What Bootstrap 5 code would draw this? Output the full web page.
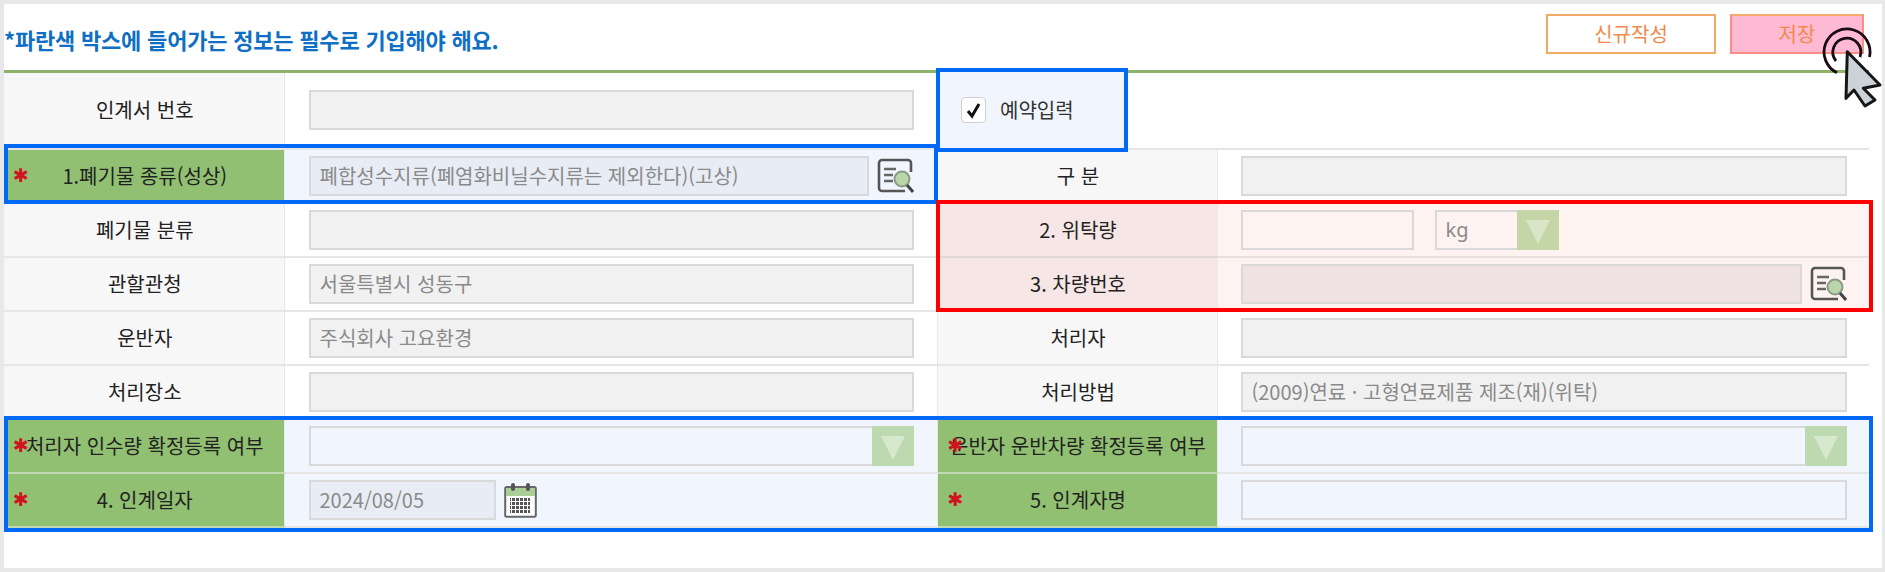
<!DOCTYPE html>
<html lang="ko">
<head>
<meta charset="utf-8">
<title>인계서 입력</title>
<link rel="stylesheet" href="https://cdn.jsdelivr.net/npm/bootstrap@5.3.0/dist/css/bootstrap.min.css">
<style>
html,body{height:100%;overflow:hidden}
body{background:#e8e8e8;font-family:"Noto Sans CJK KR","Noto Sans",sans-serif;font-size:20px;color:#222}
.sheet{position:relative;background:#fff;margin:4px 3px 4px 4px;height:564px;padding-right:13px}
.sheet-head{height:66px;padding-right:5px;padding-top:10px}
.sheet-title{font-size:22px;font-weight:700;color:#0e6fc4;letter-spacing:-.2px;margin:12px 0 0;line-height:1.2}
.act-row{column-gap:14px}
.act{width:170px;height:40px;padding:0;border-radius:0;background:#fff;border:2px solid #f2ab66;color:#f08a4b;font-size:20px;line-height:1}
.act-save{width:134px;background:#ffb9d2;border-color:#f78f82;border-top-color:#f5ad6c}
.act:hover{background:#fff;border-color:#f2ab66;color:#f08a4b}
.form-grid{table-layout:fixed;width:1865px;border-top:3px solid #8fb26a;margin:0}
.form-grid td,.form-grid th{padding:0;border:0;border-bottom:2px solid #e6e6e6;vertical-align:middle;height:54px;background:#fff;box-shadow:none;color:#222}
.form-grid tr.first td,.form-grid tr.first th{height:77px}
.form-grid th{position:relative;font-weight:400;text-align:center;background:#f7f7f7;border-right:1px solid #e8e8e8;white-space:nowrap;padding-left:2px}
.form-grid th.side2{border-left:1px solid #e8e8e8}
.form-grid .val{padding-left:24px;padding-right:23px}
.form-grid .val2{padding-left:23px;padding-right:22px}
.form-grid th.need{background:#91c072;border-bottom-color:#c3d9b6}
.form-grid td.tint{background:#f1f6fe}
.form-grid th.warm{background:#f7e6e6;border-bottom-color:#e2d8d8}
.form-grid td.warm{background:#fff3f2;border-bottom-color:#e8dedd}
.star{position:absolute;left:9px;top:50%;transform:translateY(-54%);color:#d0141f;font-family:"DejaVu Sans",sans-serif;font-size:19px;line-height:1}
.side2 .star{left:10px}
.fld{height:40px;border-radius:0;border:2px solid #d9d9d9;background:#f1f1f1;color:#8a8a8a;font-size:20px;padding:0 9px;box-shadow:none}
.fld:disabled,.fld[readonly]{background:#f1f1f1;color:#8a8a8a;opacity:1}
.form-grid .tint .fld[readonly]{background:#e8ecf4}
.form-grid .warm .fld[readonly]{background:#f1e3e3}
.form-grid .tint .fld-open[readonly]{background:#f1f6fe}
.form-grid .warm .fld-warm[readonly]{background:#fff3f2;width:173px}
.fld-date{width:187px}
.pick{height:40px;border:2px solid #d9d9d9;background:#f1f6fe}
.pick select{appearance:none;border:0;background:transparent;flex:1 1 auto;min-width:0;color:#8a8a8a;font-family:"Noto Sans","Noto Sans CJK KR",sans-serif;font-size:20px;padding:0 9px;outline:0}
.pick-arrow{flex:0 0 40px;background:#bcd9b0;margin:-2px -2px -2px 0;width:42px;height:40px;display:flex}
.pick-kg{width:124px;background:#fff3f2;margin-left:21px}
.pick-kg .pick-arrow{background:#c5d6a6}
.tick-wrap{position:relative;z-index:3;padding-left:24px;column-gap:14px}
.tick{width:25px;height:26px;border:1px solid #cfcfcf;border-radius:4px;background:#fff;display:flex;flex:none}
.tick-text{font-size:20px;color:#333}
.mark-box{position:absolute;border:4px solid #0069f5;pointer-events:none}
.mark-red{border-color:#f00}
.mk1{left:0;top:140px;width:934px;height:60px}
.mk2{left:932px;top:64px;width:192px;height:84px;background:#f1f6fe;z-index:2}
.mk3{left:932px;top:196px;width:937px;height:112px;z-index:2}
.mk4{left:0;top:412px;width:1869px;height:116px}
.pointer{position:absolute;left:1816px;top:21px;pointer-events:none;z-index:4}
</style>
</head>
<body>
<div class="sheet">
  <div class="sheet-head d-flex justify-content-between align-items-start">
    <p class="sheet-title">*파란색 박스에 들어가는 정보는 필수로 기입해야 해요.</p>
    <div class="d-flex act-row">
      <button type="button" class="btn act">신규작성</button>
      <button type="button" class="btn act act-save">저장</button>
    </div>
  </div>
  <table class="table form-grid">
    <colgroup><col style="width:280px"><col style="width:653px"><col style="width:280px"><col style="width:652px"></colgroup>
    <tbody>
      <tr class="first">
        <th>인계서 번호</th>
        <td class="val"><input class="form-control fld" readonly></td>
        <td colspan="2" class="p-0">
          <div class="d-flex align-items-center tick-wrap"><span class="tick"><svg width="23" height="24" viewBox="0 0 23 24"><path d="M6 13l4 5 7-12" fill="none" stroke="#111" stroke-width="3"/></svg></span><span class="tick-text">예약입력</span></div>
        </td>
      </tr>
      <tr>
        <th class="need"><span class="star">✱</span>1.폐기물 종류(성상)</th>
        <td class="val tint">
          <div class="d-flex align-items-center gap-2">
            <input class="form-control fld" readonly value="폐합성수지류(폐염화비닐수지류는 제외한다)(고상)">
            <svg class="flex-shrink-0" width="37" height="36" viewBox="0 0 37 36"><path d="M28 33H5a3 3 0 0 1-3-3V5a3 3 0 0 1 3-3h26a3 3 0 0 1 3 3v9" fill="none" stroke="#555" stroke-width="2.6"/><path d="M7 11h12M7 17h9M7 23h9" stroke="#666" stroke-width="2.4"/><circle cx="25" cy="21" r="7.5" fill="#b9d6a8" stroke="#8a9a8a" stroke-width="2"/><path d="M30 27l6 7" stroke="#444" stroke-width="3"/></svg>
          </div>
        </td>
        <th class="side2">구 분</th>
        <td class="val2"><input class="form-control fld" readonly></td>
      </tr>
      <tr>
        <th>폐기물 분류</th>
        <td class="val"><input class="form-control fld" readonly></td>
        <th class="side2 warm">2. 위탁량</th>
        <td class="val2 warm">
          <div class="d-flex align-items-center">
            <input class="form-control fld fld-warm" readonly>
            <div class="pick pick-kg d-flex"><select aria-label="단위"><option>kg</option></select><span class="pick-arrow"><svg width="42" height="40" viewBox="0 0 42 40"><path d="M9 10h24l-12 24z" fill="#dbe5c8"/></svg></span></div>
          </div>
        </td>
      </tr>
      <tr>
        <th>관할관청</th>
        <td class="val"><input class="form-control fld" readonly value="서울특별시 성동구"></td>
        <th class="side2 warm">3. 차량번호</th>
        <td class="val2 warm">
          <div class="d-flex align-items-center gap-2">
            <input class="form-control fld" readonly>
            <svg class="flex-shrink-0" width="37" height="36" viewBox="0 0 37 36"><path d="M28 33H5a3 3 0 0 1-3-3V5a3 3 0 0 1 3-3h26a3 3 0 0 1 3 3v9" fill="none" stroke="#555" stroke-width="2.6"/><path d="M7 11h12M7 17h9M7 23h9" stroke="#666" stroke-width="2.4"/><circle cx="25" cy="21" r="7.5" fill="#b9d6a8" stroke="#8a9a8a" stroke-width="2"/><path d="M30 27l6 7" stroke="#444" stroke-width="3"/></svg>
          </div>
        </td>
      </tr>
      <tr>
        <th>운반자</th>
        <td class="val"><input class="form-control fld" readonly value="주식회사 고요환경"></td>
        <th class="side2">처리자</th>
        <td class="val2"><input class="form-control fld" readonly></td>
      </tr>
      <tr>
        <th>처리장소</th>
        <td class="val"><input class="form-control fld" readonly></td>
        <th class="side2">처리방법</th>
        <td class="val2"><input class="form-control fld" readonly value="(2009)연료 · 고형연료제품 제조(재)(위탁)"></td>
      </tr>
      <tr>
        <th class="need"><span class="star">✱</span>처리자 인수량 확정등록 여부</th>
        <td class="val tint"><div class="pick d-flex"><select aria-label="처리자 인수량 확정등록 여부"><option></option></select><span class="pick-arrow"><svg width="42" height="40" viewBox="0 0 42 40"><path d="M9 10h24l-12 24z" fill="#d6e8ce"/></svg></span></div></td>
        <th class="need side2"><span class="star">✱</span>운반자 운반차량 확정등록 여부</th>
        <td class="val2 tint"><div class="pick d-flex"><select aria-label="운반자 운반차량 확정등록 여부"><option></option></select><span class="pick-arrow"><svg width="42" height="40" viewBox="0 0 42 40"><path d="M9 10h24l-12 24z" fill="#d6e8ce"/></svg></span></div></td>
      </tr>
      <tr>
        <th class="need"><span class="star">✱</span>4. 인계일자</th>
        <td class="val tint">
          <div class="d-flex align-items-center gap-2">
            <input class="form-control fld fld-date" readonly value="2024/08/05">
            <svg class="flex-shrink-0" width="33" height="36" viewBox="0 0 33 36"><defs><pattern id="cal" width="4" height="4" patternUnits="userSpaceOnUse"><rect width="3" height="3" fill="#555"/></pattern></defs><rect x="1.2" y="5" width="30.6" height="29.8" rx="1.5" fill="#fff" stroke="#666" stroke-width="2"/><rect x="2" y="6" width="29" height="8" fill="#a9cf97"/><rect x="7" y="1" width="4" height="8" rx="2" fill="#555"/><rect x="22" y="1" width="4" height="8" rx="2" fill="#555"/><rect x="6" y="16" width="20" height="15" fill="url(#cal)"/></svg>
          </div>
        </td>
        <th class="need side2"><span class="star">✱</span>5. 인계자명</th>
        <td class="val2 tint"><input class="form-control fld fld-open" readonly></td>
      </tr>
    </tbody>
  </table>
  <div class="mark-box mk1"></div>
  <div class="mark-box mk2"></div>
  <div class="mark-box mk4"></div>
  <div class="mark-box mark-red mk3"></div>
  <svg class="pointer" width="65" height="85" viewBox="0 0 65 85"><path d="M17 47.7A23 23 0 1 1 49.5 32" fill="none" stroke="#1a0a14" stroke-width="2.8"/><path d="M16 36A14 14 0 1 1 40 32" fill="none" stroke="#1a0a14" stroke-width="2.8"/><path d="M27.3 26.7L60 60 43.3 63.3 55 75 45 81 34 65 26 73.3z" fill="#ccd3d8" stroke="#161616" stroke-width="3" stroke-linejoin="round"/></svg>
</div>
<script src="https://cdn.jsdelivr.net/npm/bootstrap@5.3.0/dist/js/bootstrap.bundle.min.js"></script>
</body>
</html>
